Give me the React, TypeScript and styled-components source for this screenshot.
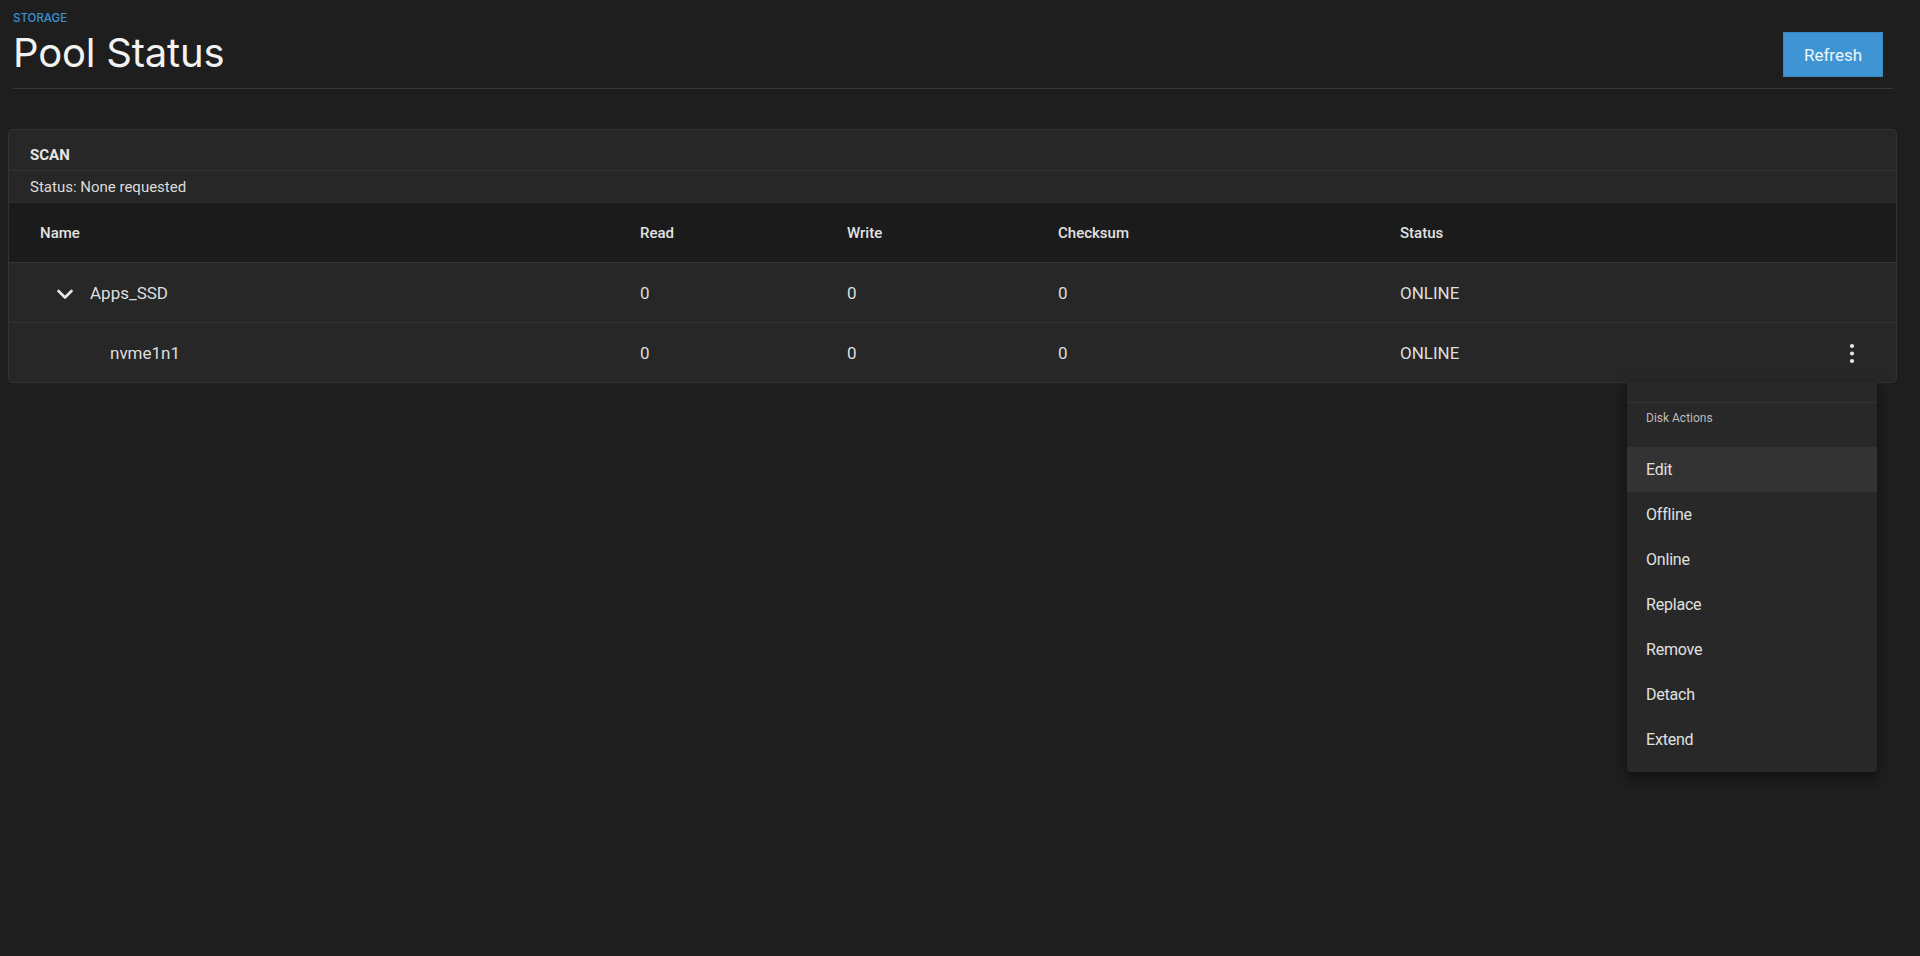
import React from "react";
import styled, { createGlobalStyle } from "styled-components";

const Global = createGlobalStyle`
  html, body { margin: 0; padding: 0; background: #1e1e1e; }
  body { font-family: Roboto, "Noto Sans", "Liberation Sans", sans-serif; color: #e0e0e0; min-height: 956px; }
  * { box-sizing: border-box; }
`;

const Page = styled.div`
  min-height: 956px;
  background: #1e1e1e;
`;

const Header = styled.header`
  display: flex;
  justify-content: space-between;
  align-items: flex-end;
  margin: 0 27px 0 13px;
  padding: 10px 10px 12px 0;
  border-bottom: 1px solid #383838;
`;

const TitleBlock = styled.div`
  display: flex;
  flex-direction: column;
  gap: 4px;
`;

const Crumb = styled.div`
  font-family: Inter, "Liberation Sans", sans-serif;
  font-size: 11.5px;
  line-height: 16px;
  font-weight: 500;
  color: #3d91d1;
`;

const Title = styled.h1`
  margin: 0;
  font-family: Inter, "Liberation Sans", sans-serif;
  font-size: 40px;
  line-height: 46px;
  font-weight: 400;
  color: #f2f2f2;
  letter-spacing: -0.2px;
`;

const Button = styled.button`
  width: 100px;
  height: 45px;
  border: 1px solid #3a87c0;
  background: #3f95d3;
  color: #eef5fb;
  font-family: Roboto, "Liberation Sans", sans-serif;
  font-size: 17px;
  font-weight: 400;
  border-radius: 0;
  margin-bottom: -1px;
  cursor: pointer;
`;

const Card = styled.section`
  margin: 40px 23px 0 8px;
  background: #272727;
  border: 1px solid #333333;
  border-radius: 5px;
`;

const CardTitle = styled.div`
  padding: 16px 21px 6px;
  font-size: 15px;
  line-height: 18px;
  font-weight: 700;
  color: #e6e6e6;
`;

const CardStatus = styled.div`
  padding: 7px 21px 6px;
  border-top: 1px solid #333333;
  font-size: 15px;
  line-height: 18px;
  color: #dcdcdc;
`;

const Row = styled.div<{ $head?: boolean }>`
  display: grid;
  grid-template-columns: 600px 207px 211px 342px 1fr 88px;
  align-items: center;
  height: 60px;
  border-top: 1px solid ${(p) => (p.$head ? "#2d2d2d" : "#333333")};
  background: ${(p) => (p.$head ? "#1b1b1b" : "transparent")};
  font-size: ${(p) => (p.$head ? 15 : 17)}px;
  font-weight: ${(p) => (p.$head ? 500 : 400)};
  color: ${(p) => (p.$head ? "#e2e2e2" : "#dedede")};
`;

const Cell = styled.div<{ $indent?: number }>`
  display: flex;
  align-items: center;
  padding-left: ${(p) => p.$indent ?? 31}px;
  white-space: nowrap;
`;

const ToggleIcon = styled.svg`
  width: 24px;
  height: 24px;
  margin-right: 13px;
  flex: none;
`;

const ActionCell = styled.div`
  position: relative;
  display: flex;
  justify-content: center;
  align-items: center;
  height: 100%;
`;

const KebabButton = styled.button`
  width: 24px;
  height: 24px;
  padding: 0;
  border: none;
  background: transparent;
  display: flex;
  align-items: center;
  justify-content: center;
  cursor: pointer;
`;

const Menu = styled.div`
  position: absolute;
  top: 100%;
  right: 19px;
  width: 250px;
  z-index: 10;
  background: #282828;
  border-radius: 0 0 4px 4px;
  padding: 20px 0 10px;
  box-shadow: 0 5px 5px -3px rgba(0, 0, 0, 0.25), 0 8px 10px 1px rgba(0, 0, 0, 0.16), 0 3px 14px 2px rgba(0, 0, 0, 0.14);
`;

const MenuLabel = styled.div`
  border-top: 1px solid #343434;
  padding: 8px 19px 22px 19px;
  font-size: 12px;
  line-height: 14px;
  color: #bdbdbd;
`;

const MenuItem = styled.div<{ $active?: boolean }>`
  height: 45px;
  display: flex;
  align-items: center;
  padding-left: 19px;
  font-size: 16px;
  letter-spacing: -0.2px;
  color: #e0e0e0;
  background: ${(p) => (p.$active ? "#333333" : "transparent")};
`;

const Chevron = () => (
  <ToggleIcon viewBox="0 0 24 24" fill="none">
    <path d="M5.5 10 L12 16.5 L18.5 10" stroke="#e8e8e8" strokeWidth="2.6" strokeLinecap="round" strokeLinejoin="round" />
  </ToggleIcon>
);

const Kebab = () => (
  <svg width="24" height="24" viewBox="0 0 24 24">
    <circle cx="12" cy="5" r="2.1" fill="#e6e6e6" />
    <circle cx="12" cy="12.5" r="2.1" fill="#e6e6e6" />
    <circle cx="12" cy="20" r="2.1" fill="#e6e6e6" />
  </svg>
);

const menuItems = ["Edit", "Offline", "Online", "Replace", "Remove", "Detach", "Extend"];

export default function App() {
  return (
    <Page>
      <Global />
      <Header>
        <TitleBlock>
          <Crumb>STORAGE</Crumb>
          <Title>Pool Status</Title>
        </TitleBlock>
        <Button>Refresh</Button>
      </Header>
      <Card>
        <CardTitle>SCAN</CardTitle>
        <CardStatus>Status: None requested</CardStatus>
        <Row $head>
          <Cell>Name</Cell>
          <Cell>Read</Cell>
          <Cell>Write</Cell>
          <Cell>Checksum</Cell>
          <Cell>Status</Cell>
          <Cell />
        </Row>
        <Row>
          <Cell $indent={44}>
            <Chevron />
            Apps_SSD
          </Cell>
          <Cell>0</Cell>
          <Cell>0</Cell>
          <Cell>0</Cell>
          <Cell>ONLINE</Cell>
          <Cell />
        </Row>
        <Row>
          <Cell $indent={101}>nvme1n1</Cell>
          <Cell>0</Cell>
          <Cell>0</Cell>
          <Cell>0</Cell>
          <Cell>ONLINE</Cell>
          <ActionCell>
            <KebabButton aria-label="Disk actions">
              <Kebab />
            </KebabButton>
            <Menu>
              <MenuLabel>Disk Actions</MenuLabel>
              {menuItems.map((m, i) => (
                <MenuItem key={m} $active={i === 0}>
                  {m}
                </MenuItem>
              ))}
            </Menu>
          </ActionCell>
        </Row>
      </Card>
    </Page>
  );
}
